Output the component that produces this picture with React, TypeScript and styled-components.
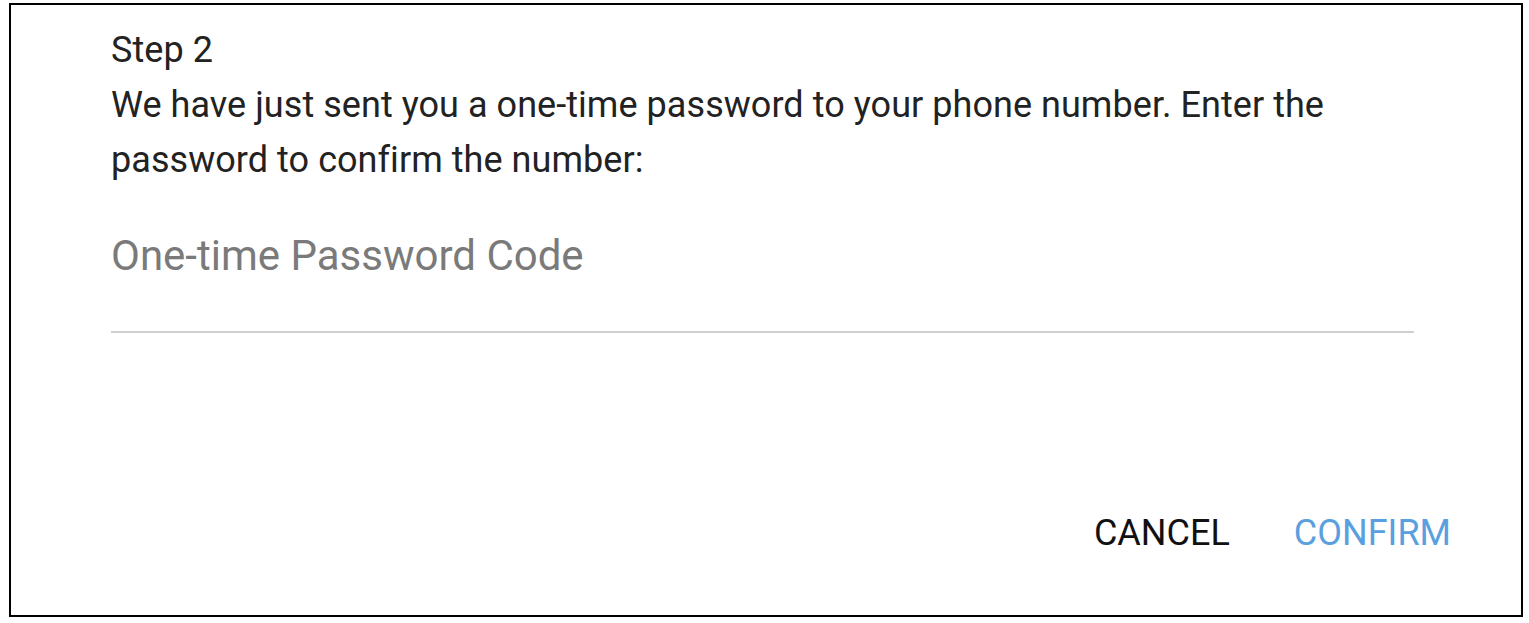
import {createGlobalStyle, styled} from "styled-components"

const Global = createGlobalStyle`
  body {
    margin: 0;
    background: #fff;
    font-family: Roboto, "Noto Sans", sans-serif;
  }
`

export default function App() {
  return (
    <>
      <Global />
      <Page>
        <Dialog>
          <Content>
            <Text>Step 2</Text>
            <Text>
              We have just sent you a one-time password to your phone number. Enter the
              password to confirm the number:
            </Text>
            <Field placeholder="One-time Password Code" />
          </Content>
          <Actions>
            <Button>CANCEL</Button>
            <Button $primary>CONFIRM</Button>
          </Actions>
        </Dialog>
      </Page>
    </>
  )
}

const Page = styled.div`
  padding: 3px 6px 6px 9px;
`

const Dialog = styled.div`
  box-sizing: border-box;
  width: 1514px;
  height: 614px;
  border: 2px solid #000;
  display: flex;
  flex-direction: column;
  justify-content: space-between;
`

const Content = styled.div`
  padding: 18px 0 0 100px;
  display: flex;
  flex-direction: column;
`

const Text = styled.div`
  font-size: 36px;
  line-height: 55px;
  letter-spacing: 0.05px;
  color: #222;
  width: 1260px;
`

const Field = styled.input`
  margin-top: 43px;
  width: 1303px;
  box-sizing: content-box;
  height: 50px;
  border: none;
  border-bottom: 2px solid #d0d0d0;
  padding: 0 0 50px 0;
  font-family: Roboto, sans-serif;
  font-size: 42px;
  line-height: 50px;
  outline: none;
  background: transparent;

  &::placeholder {
    color: #7a7a7a;
  }
`

const Actions = styled.div`
  display: flex;
  justify-content: flex-end;
  column-gap: 64px;
  padding: 0 70px 62px 0;
`

const Button = styled.button<{$primary?: boolean}>`
  border: none;
  background: none;
  padding: 0;
  font-family: Roboto, sans-serif;
  font-size: 36px;
  line-height: 40px;
  color: ${({$primary}) => ($primary ? "#5a9fe0" : "#111")};
  cursor: pointer;
`
